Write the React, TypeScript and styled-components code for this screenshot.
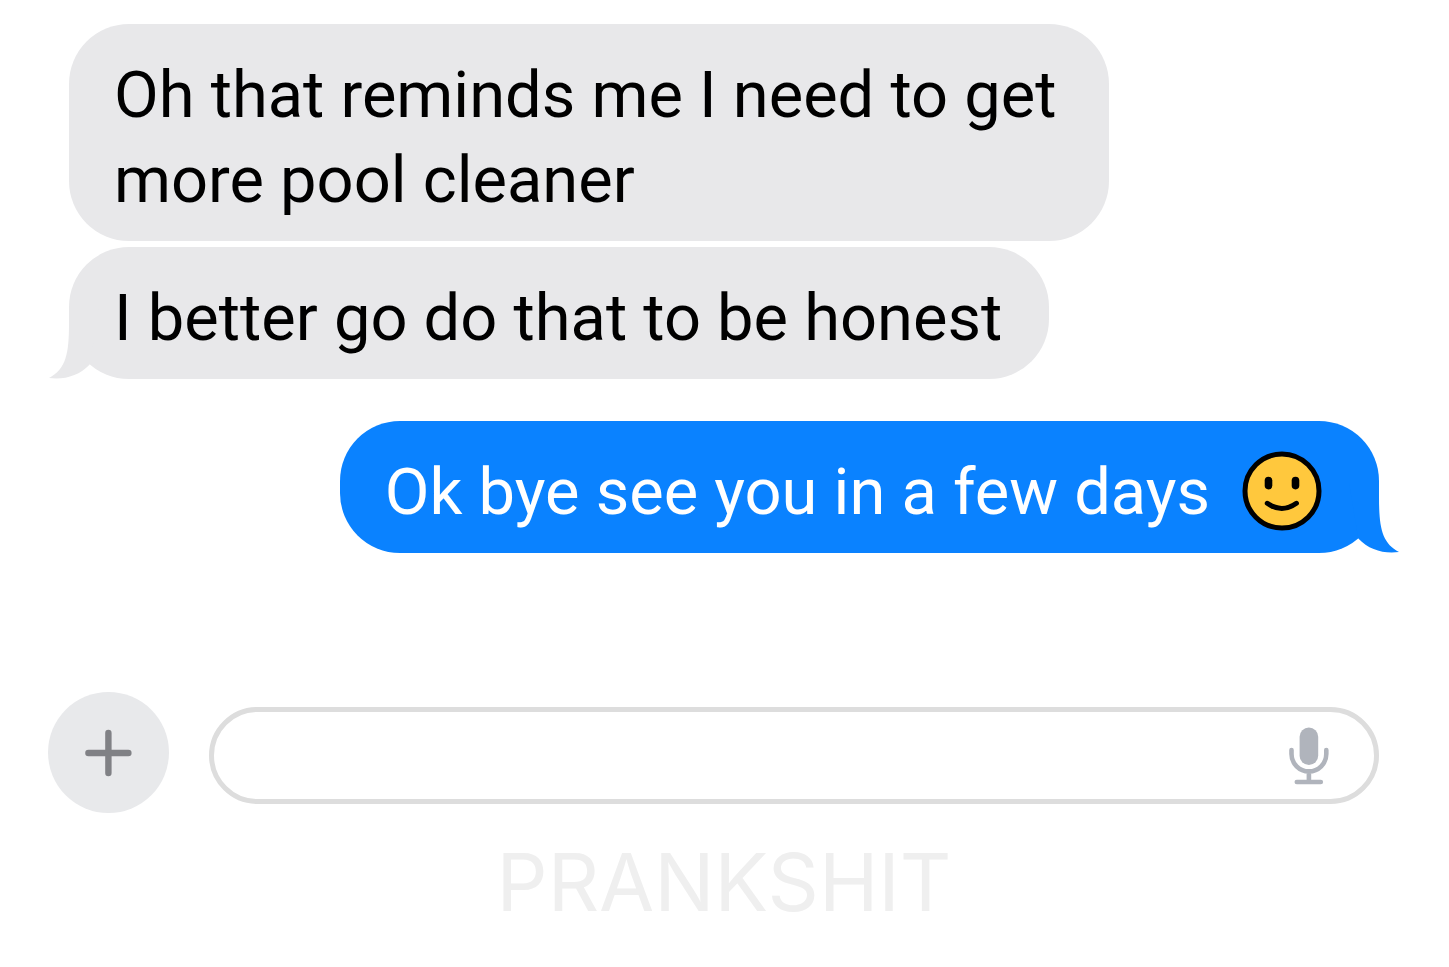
import React from "react";
import styled, { createGlobalStyle } from "styled-components";

const Global = createGlobalStyle`
  * { box-sizing: border-box; }
  body { margin: 0; background: #fff; font-family: Inter, "Liberation Sans", sans-serif; }
`;

const Screen = styled.main`
  padding: 24px 70px 36px 69px;
`;

const Thread = styled.section`
  display: flex;
  flex-direction: column;
  align-items: flex-start;
  gap: 6px;
`;

const Bubble = styled.div<{ $sent?: boolean }>`
  position: relative;
  display: flex;
  align-items: center;
  gap: 32px;
  max-width: 1040px;
  padding: 29px 47px 18px 45px;
  border-radius: 60px;
  font-family: Roboto, "Liberation Sans", sans-serif;
  font-size: 65px;
  line-height: 85px;
  align-self: ${(p) => (p.$sent ? "flex-end" : "flex-start")};
  margin-top: ${(p) => (p.$sent ? "36px" : "0")};
  background: ${(p) => (p.$sent ? "#0a82ff" : "#e8e8ea")};
  color: ${(p) => (p.$sent ? "#fff" : "#000")};
`;

const Tail = styled.svg<{ $sent?: boolean }>`
  position: absolute;
  bottom: 0;
  width: 60px;
  height: 70px;
  ${(p) => (p.$sent ? "right: -20px;" : "left: -20px; transform: scaleX(-1);")}
  fill: ${(p) => (p.$sent ? "#0a82ff" : "#e8e8ea")};
`;

const Emoji = styled.svg`
  flex: none;
  width: 80px;
  height: 80px;
  margin: 0 10px 4px 0;
`;

const Composer = styled.form`
  display: flex;
  align-items: flex-start;
  gap: 40px;
  margin: 139px 0 0 -21px;
`;

const AddButton = styled.button`
  flex: none;
  display: grid;
  place-items: center;
  width: 121px;
  height: 121px;
  padding: 0;
  border: 0;
  border-radius: 50%;
  background: #e8e9eb;
`;

const Field = styled.div`
  flex: 1;
  display: flex;
  align-items: center;
  height: 97px;
  margin-top: 15px;
  padding: 0 45px;
  border: 5px solid #ddd;
  border-radius: 49px;
`;

const MessageInput = styled.input`
  flex: 1;
  min-width: 0;
  border: 0;
  outline: 0;
  background: transparent;
  font: 60px Inter, sans-serif;
`;

const MicButton = styled.button`
  padding: 0;
  border: 0;
  background: none;
  line-height: 0;
`;

const Brand = styled.footer`
  margin-top: 20px;
  text-align: center;
  font-size: 80px;
  line-height: 97px;
  color: #efefef;
`;

const TailShape = ({ sent }: { sent?: boolean }) => (
  <Tail $sent={sent} viewBox="0 0 60 70" aria-hidden="true">
    <path d="M10 0H40V14C40 45 43 60 60 69C45 71 30 67 19.3 55.5Z" />
  </Tail>
);

export default function App() {
  return (
    <>
      <Global />
      <Screen>
        <Thread>
          <Bubble>Oh that reminds me I need to get more pool cleaner</Bubble>
          <Bubble>
            <TailShape />
            I better go do that to be honest
          </Bubble>
          <Bubble $sent>
            <TailShape sent />
            <span>Ok bye see you in a few days</span>
            <Emoji viewBox="0 0 80 80" role="img" aria-label="Smiling face">
              <circle cx="40" cy="40" r="37" fill="#ffc83d" stroke="#000" strokeWidth="5" />
              <rect x="22.7" y="25.7" width="7.6" height="12.7" rx="3.8" />
              <rect x="49.7" y="25.7" width="7.6" height="12.7" rx="3.8" />
              <path d="M25.3 52.3Q39.8 62.7 54.4 52.3" fill="none" stroke="#000" strokeWidth="5" strokeLinecap="round" />
            </Emoji>
          </Bubble>
        </Thread>
        <Composer onSubmit={(e) => e.preventDefault()}>
          <AddButton type="button" aria-label="Add attachment">
            <svg width="48" height="48" viewBox="0 0 48 48" stroke="#808185" strokeWidth="6.4" strokeLinecap="round">
              <path d="M23.4 4V44M3.4 24H43.4" />
            </svg>
          </AddButton>
          <Field>
            <MessageInput aria-label="Message" />
            <MicButton type="button" aria-label="Dictate">
              <svg width="40" height="58" viewBox="0 0 40 58" fill="none" stroke="#b0b4bc" strokeWidth="4.6" strokeLinecap="round">
                <rect x="10.6" y="0.5" width="18.6" height="37.5" rx="9.3" fill="#b0b4bc" stroke="none" />
                <path d="M2.5 23V27A17.4 17.4 0 0 0 37.3 27V23M19.9 45V55M7.8 55H31.8" />
              </svg>
            </MicButton>
          </Field>
        </Composer>
        <Brand>PRANKSHIT</Brand>
      </Screen>
    </>
  );
}
